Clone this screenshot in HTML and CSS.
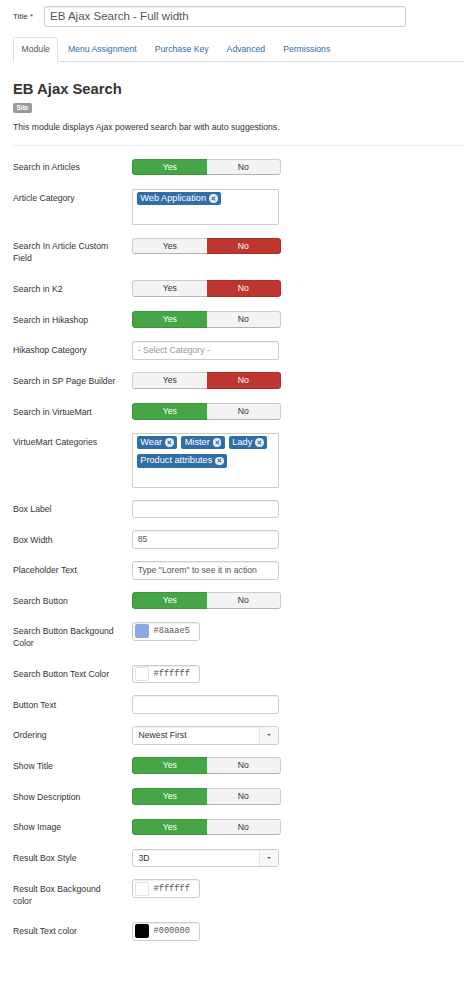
FILE: index.html
```html
<!DOCTYPE html>
<html>
<head>
<meta charset="utf-8">
<link rel="stylesheet" href="styles.css">
</head>
<body>
<div class="page">
  <div class="title-row">
    <span class="title-label">Title *</span>
    <div class="title-input">EB Ajax Search - Full width</div>
  </div>

  <ul class="tabs">
    <li class="tab active">Module</li>
    <li class="tab">Menu Assignment</li>
    <li class="tab">Purchase Key</li>
    <li class="tab">Advanced</li>
    <li class="tab">Permissions</li>
  </ul>

  <div class="module-info">
    <h2 class="module-title">EB Ajax Search</h2>
    <span class="badge">Site</span>
    <p class="module-desc">This module displays Ajax powered search bar with auto suggestions.</p>
  </div>
  <div class="divider"></div>

  <div class="form">
    <div class="row">
      <div class="label">Search in Articles</div>
      <div class="toggle"><span class="opt yes on">Yes</span><span class="opt">No</span></div>
    </div>
    <div class="row">
      <div class="label">Article Category</div>
      <div class="chips-box">
        <span class="chip">Web Application<i class="x"></i></span>
      </div>
    </div>
    <div class="row">
      <div class="label">Search In Article Custom Field</div>
      <div class="toggle"><span class="opt">Yes</span><span class="opt no on">No</span></div>
    </div>
    <div class="row">
      <div class="label">Search in K2</div>
      <div class="toggle"><span class="opt">Yes</span><span class="opt no on">No</span></div>
    </div>
    <div class="row">
      <div class="label">Search in Hikashop</div>
      <div class="toggle"><span class="opt yes on">Yes</span><span class="opt">No</span></div>
    </div>
    <div class="row">
      <div class="label">Hikashop Category</div>
      <div class="input placeholder">- Select Category -</div>
    </div>
    <div class="row">
      <div class="label">Search in SP Page Builder</div>
      <div class="toggle"><span class="opt">Yes</span><span class="opt no on">No</span></div>
    </div>
    <div class="row">
      <div class="label">Search in VirtueMart</div>
      <div class="toggle"><span class="opt yes on">Yes</span><span class="opt">No</span></div>
    </div>
    <div class="row">
      <div class="label">VirtueMart Categories</div>
      <div class="chips-box">
        <span class="chip">Wear<i class="x"></i></span>
        <span class="chip">Mister<i class="x"></i></span>
        <span class="chip">Lady<i class="x"></i></span>
        <span class="chip">Product attributes<i class="x"></i></span>
      </div>
    </div>
    <div class="row">
      <div class="label">Box Label</div>
      <div class="input"></div>
    </div>
    <div class="row">
      <div class="label">Box Width</div>
      <div class="input">85</div>
    </div>
    <div class="row">
      <div class="label">Placeholder Text</div>
      <div class="input">Type "Lorem" to see it in action</div>
    </div>
    <div class="row">
      <div class="label">Search Button</div>
      <div class="toggle"><span class="opt yes on">Yes</span><span class="opt">No</span></div>
    </div>
    <div class="row">
      <div class="label">Search Button Backgound Color</div>
      <div class="color-input"><span class="swatch sw-blue"></span><span class="hex">#8aaae5</span></div>
    </div>
    <div class="row">
      <div class="label">Search Button Text Color</div>
      <div class="color-input"><span class="swatch sw-white"></span><span class="hex">#ffffff</span></div>
    </div>
    <div class="row">
      <div class="label">Button Text</div>
      <div class="input"></div>
    </div>
    <div class="row">
      <div class="label">Ordering</div>
      <div class="select"><span class="select-text">Newest First</span><span class="select-arrow"><i class="caret"></i></span></div>
    </div>
    <div class="row">
      <div class="label">Show Title</div>
      <div class="toggle"><span class="opt yes on">Yes</span><span class="opt">No</span></div>
    </div>
    <div class="row">
      <div class="label">Show Description</div>
      <div class="toggle"><span class="opt yes on">Yes</span><span class="opt">No</span></div>
    </div>
    <div class="row">
      <div class="label">Show Image</div>
      <div class="toggle"><span class="opt yes on">Yes</span><span class="opt">No</span></div>
    </div>
    <div class="row">
      <div class="label">Result Box Style</div>
      <div class="select"><span class="select-text">3D</span><span class="select-arrow"><i class="caret"></i></span></div>
    </div>
    <div class="row">
      <div class="label">Result Box Backgound color</div>
      <div class="color-input"><span class="swatch sw-white"></span><span class="hex">#ffffff</span></div>
    </div>
    <div class="row">
      <div class="label">Result Text color</div>
      <div class="color-input"><span class="swatch sw-black"></span><span class="hex">#000000</span></div>
    </div>
  </div>
</div>
</body>
</html>
```

FILE: styles.css
```css
* { box-sizing: border-box; }
html, body { margin: 0; padding: 0; background: #fff; }
body {
  font-family: "Liberation Sans", Arial, Helvetica, sans-serif;
  font-size: 8.67px;
  line-height: 12px;
  color: #333;
}
.page { padding: 6px 0 0 13px; overflow: hidden; }

.title-row { display: flex; align-items: center; }
.title-label { width: 31px; font-size: 8px; color: #333; }
.title-input {
  width: 362px; height: 21px;
  border: 1px solid #ccc; border-radius: 2.67px;
  box-shadow: inset 0 1px 1px rgba(0,0,0,.075);
  padding: 0 5px; font-size: 11.5px; line-height: 19px; color: #555;
}

.tabs {
  list-style: none; margin: 10px 0 0; padding: 0;
  display: flex; border-bottom: 1px solid #ddd;
}
.tab {
  padding: 5.33px 7.5px; margin-right: 1px; margin-bottom: -1px;
  border: 1px solid transparent; border-radius: 2.67px 2.67px 0 0;
  color: #2f6ea5; line-height: 12px;
}
.tab.active { color: #555; border-color: #ddd; border-bottom-color: #fff; background: #fff; }

.module-info { display: flex; flex-direction: column; align-items: flex-start; }
.module-title { margin: 18px 0 0; font-size: 14.8px; line-height: 18px; font-weight: bold; color: #333; }
.badge {
  margin-top: 5px; height: 10px; padding: 0 3.5px;
  background: #999; color: #fff; border-radius: 2px;
  font-size: 6.5px; line-height: 10px; font-weight: bold;
}
.module-desc { margin: 8px 0 0; }
.divider { margin-top: 12px; height: 1px; background: #eee; }

.form { display: flex; flex-direction: column; gap: 12px; margin-top: 12.5px; }
.row { display: grid; grid-template-columns: 119px auto; align-items: start; min-height: 18.67px; }
.label { padding: 3.33px 0; width: 106.67px; line-height: 12px; }

.toggle {
  display: flex; width: 149px; height: 16.67px; margin-top: 0.5px;
  border-radius: 2.67px; overflow: hidden;
}
.opt {
  flex: 1; text-align: center; line-height: 14.67px;
  background: #f3f3f3; color: #333;
  border: 1px solid #ccc; border-bottom-color: #b3b3b3;
}
.opt:first-child { border-radius: 2.67px 0 0 2.67px; border-right: none; }
.opt:last-child { border-radius: 0 2.67px 2.67px 0; border-left: none; }
.opt.on { color: #fff; }
.opt.yes.on { background: #46a546; border-color: #3e923e; }
.opt.no.on { background: #bd362f; border-color: #a8302a; }

.input {
  width: 146.67px; height: 18.67px;
  border: 1px solid #ccc; border-radius: 2.67px;
  box-shadow: inset 0 1px 1px rgba(0,0,0,.075);
  padding: 0 4.67px; line-height: 16.67px; color: #555;
}
.input.placeholder { color: #999; border-radius: 2px; }

.chips-box {
  width: 146.67px; display: flex; flex-wrap: wrap; align-content: flex-start;
  gap: 4.7px 4px;
  border: 1px solid #ccc; border-radius: 1px;
  padding: 1.8px 3.5px 19px;
}
.chip {
  display: inline-flex; align-items: center; height: 13.5px;
  padding: 0 3.3px 0 3.8px; background: #2f6ea6; color: #fff;
  border-radius: 2px; font-size: 9.2px; line-height: 13.5px; white-space: nowrap;
}
.x {
  position: relative; display: inline-block; width: 8.5px; height: 8.5px; margin-left: 3px;
  border-radius: 50%; background: #e8eef5;
}
.x::before, .x::after {
  content: ""; position: absolute; left: 2px; top: 3.75px; width: 4.5px; height: 1px;
  background: #2f6ea6; transform: rotate(45deg);
}
.x::after { transform: rotate(-45deg); }

.color-input {
  display: flex; align-items: center; width: 68px; height: 18.67px;
  border: 1px solid #ccc; border-radius: 2.67px;
  box-shadow: inset 0 1px 1px rgba(0,0,0,.075);
  padding-left: 2px;
}
.swatch { width: 14px; height: 14px; border-radius: 2px; flex: none; }
.sw-blue { background: #8aaae5; }
.sw-white { background: #fff; border: 1px solid #e3e3e3; }
.sw-black { background: #000; }
.hex { margin-left: 4.5px; font-family: "Liberation Mono", "DejaVu Sans Mono", monospace; font-size: 8.67px; color: #555; }

.select {
  display: flex; width: 146.67px; height: 18.67px;
  border: 1px solid #ccc; border-radius: 2.67px; background: #fff;
  box-shadow: inset 0 1px 1px rgba(0,0,0,.05);
}
.select-text { flex: 1; padding-left: 5.5px; line-height: 16.67px; color: #333; }
.select-arrow {
  width: 19px; border-left: 1px solid #e3e3e3; background: #f7f7f7;
  display: flex; align-items: center; justify-content: center;
  border-radius: 0 2.67px 2.67px 0;
}
.caret {
  width: 0; height: 0;
  border-left: 2.5px solid transparent; border-right: 2.5px solid transparent;
  border-top: 2.5px solid #666;
}
```
